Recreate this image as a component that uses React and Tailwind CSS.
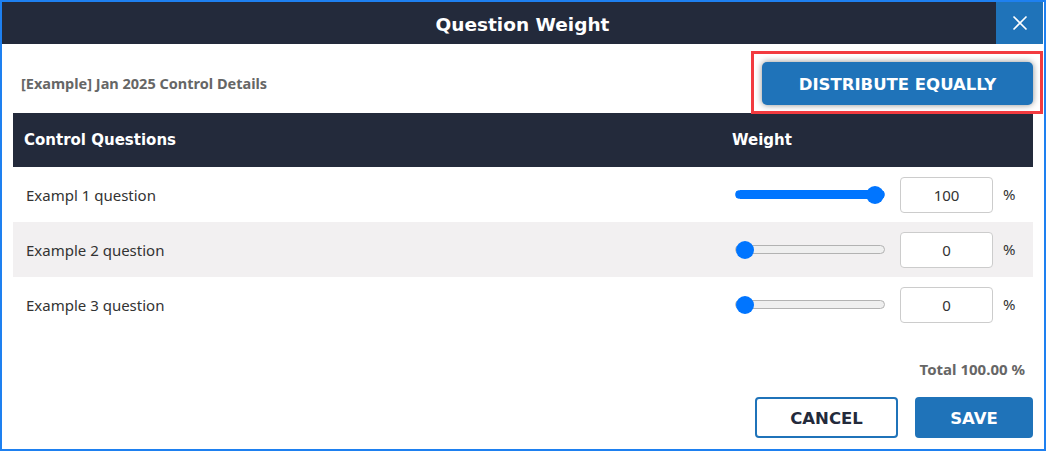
import { useState } from "react";

const questions = [
  { id: 1, label: "Exampl 1 question", weight: 100 },
  { id: 2, label: "Example 2 question", weight: 0 },
  { id: 3, label: "Example 3 question", weight: 0 },
];

export default function App() {
  const [rows, setRows] = useState(questions);

  const setWeight = (id, value) => {
    setRows(rows.map((r) => (r.id === id ? { ...r, weight: Number(value) } : r)));
  };

  const total = rows.reduce((sum, r) => sum + r.weight, 0);

  return (
    <div className="w-[1046px] h-[451px] border-2 border-[#1e80f0] bg-white flex flex-col font-['Noto_Sans',sans-serif]">
      {/* Header */}
      <div className="flex h-[42px] bg-[#232a3b] mr-px">
        <div className="flex-1 flex items-center justify-center pl-[47px] pt-[4px]">
          <h2 className="text-white text-[18.5px] font-bold font-['DejaVu_Sans',sans-serif]">
            Question Weight
          </h2>
        </div>
        <button className="w-[47px] h-[42px] bg-[#1f73b9] flex items-center justify-center">
          <svg width="16" height="16" viewBox="0 0 16 16" fill="none" stroke="white" strokeWidth="1.6">
            <path d="M1.5 1.5 L14.5 14.5 M14.5 1.5 L1.5 14.5" />
          </svg>
        </button>
      </div>

      {/* Body */}
      <div className="flex-1 flex flex-col px-[11px] pb-[11px]">
        <div className="flex items-center justify-between pt-[18px] pb-[8px]">
          <p className="pl-[8px] text-[14.5px] font-bold text-[#666666]">
            [Example] Jan 2025 Control Details
          </p>
          <div className="relative">
            {/* annotation frame */}
            <div className="absolute -left-[11px] -right-[10px] -top-[11px] -bottom-[9px] border-[3px] border-[#f23b40]" />
            <button className="w-[271px] h-[43px] pt-[3px] rounded-[5px] bg-[#1f73b9] text-white text-[16.5px] font-bold font-['DejaVu_Sans',sans-serif] shadow-[0_0_6px_rgba(0,0,0,0.45)]">
              DISTRIBUTE EQUALLY
            </button>
          </div>
        </div>

        {/* Table */}
        <div className="grid grid-cols-[1fr_301px] h-[54px] items-center bg-[#232a3b] text-white text-[15px] font-bold font-['DejaVu_Sans',sans-serif]">
          <div className="pl-[11px]">Control Questions</div>
          <div>Weight</div>
        </div>
        {rows.map((r, i) => (
          <div
            key={r.id}
            className={`grid grid-cols-[1fr_301px] h-[55px] items-center ${i % 2 === 1 ? "bg-[#f2f0f1]" : "bg-white"}`}
          >
            <div className="pl-[13px] pt-px text-[15px] text-[#333333]">{r.label}</div>
            <div className="flex items-center">
              <input
                type="range"
                min="0"
                max="100"
                value={r.weight}
                onChange={(e) => setWeight(r.id, e.target.value)}
                style={{
                  background: `linear-gradient(to right, #0075ff ${r.weight}%, #efefef ${r.weight}%)`,
                  borderColor: r.weight > 0 ? "#0075ff" : "#b2b2b2",
                }}
                className="appearance-none w-[150px] h-[9px] ml-[3px] rounded-full border cursor-pointer [&::-webkit-slider-thumb]:appearance-none [&::-webkit-slider-thumb]:w-[18px] [&::-webkit-slider-thumb]:h-[18px] [&::-webkit-slider-thumb]:rounded-full [&::-webkit-slider-thumb]:bg-[#0075ff]"
              />
              <input
                type="text"
                value={r.weight}
                onChange={(e) => setWeight(r.id, e.target.value || 0)}
                className="ml-[15px] w-[93px] h-[36px] rounded-[4px] border border-[#cccccc] bg-white text-center text-[15px] text-[#333333] outline-none"
              />
              <span className="ml-[10px] text-[15px] text-[#333333]">%</span>
            </div>
          </div>
        ))}

        <div className="flex justify-end pr-[8px] pt-[26px]">
          <span className="text-[15px] font-bold text-[#666666]">Total {total.toFixed(2)} %</span>
        </div>

        <div className="mt-auto flex justify-end gap-[17px]">
          <button className="w-[143px] h-[41px] pt-[3px] rounded-[4px] border-2 border-[#1f73b9] bg-white text-[#232a3b] text-[16.5px] font-bold font-['DejaVu_Sans',sans-serif]">
            CANCEL
          </button>
          <button className="w-[118px] h-[41px] pt-[3px] rounded-[4px] bg-[#1f73b9] text-white text-[16.5px] font-bold font-['DejaVu_Sans',sans-serif]">
            SAVE
          </button>
        </div>
      </div>
    </div>
  );
}
